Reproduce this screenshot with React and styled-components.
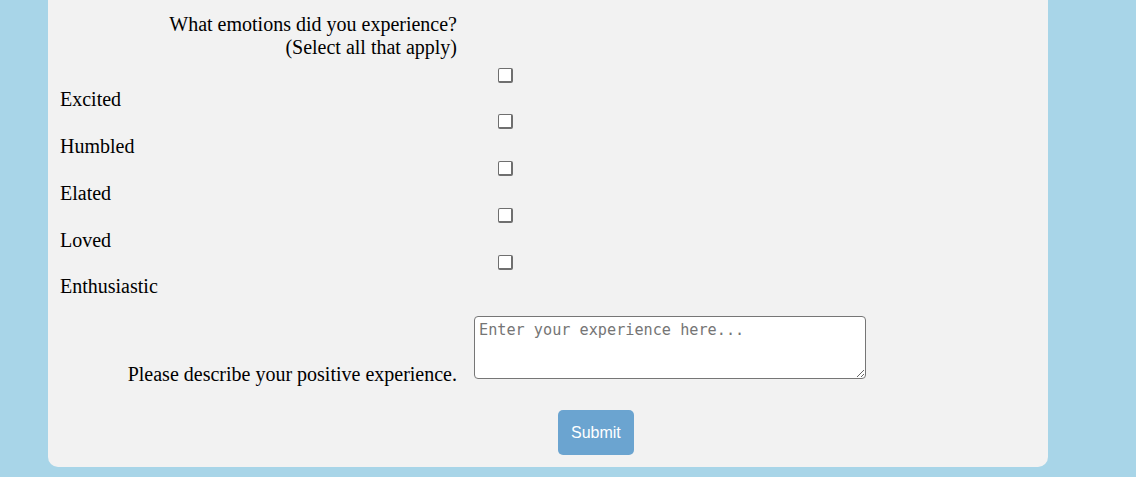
import React from "react";
import styled, { createGlobalStyle } from "styled-components";

const GlobalStyle = createGlobalStyle`
  html, body {
    margin: 0;
    padding: 0;
    background: #a8d5e8;
  }
  body {
    font-family: "Liberation Serif", "Times New Roman", serif;
    color: #000;
  }
`;

const Page = styled.div`
  background: #a8d5e8;
  padding: 0 88px 10px 48px;
`;

const Card = styled.form`
  width: 1000px;
  box-sizing: border-box;
  background: #f2f2f2;
  border-radius: 0 0 10px 10px;
  padding: 12.7px 12px 12px 12px;
  font-size: 20px;
  line-height: 23px;
`;

const FieldRow = styled.div`
  display: grid;
  grid-template-columns: 397px 1fr;
  column-gap: 17px;
  align-items: ${(p) => p.$align || "start"};
  margin-top: ${(p) => p.$top || "0px"};
`;

const RightLabel = styled.label`
  text-align: right;
  display: block;
`;

const EmotionList = styled.div`
  margin-top: 6px;
`;

const CheckRow = styled.div`
  display: grid;
  grid-template-columns: 397px 1fr;
  column-gap: 17px;
  height: 23.75px;
`;

const Check = styled.input.attrs({ type: "checkbox" })`
  appearance: none;
  -webkit-appearance: none;
  grid-column: 2;
  box-sizing: border-box;
  width: 15px;
  height: 15px;
  margin: 3px 0 0 24px;
  background: #fff;
  border-style: solid;
  border-color: #6f6f6f;
  border-width: 1px 2px 2px 1px;
  border-radius: 2px;
`;

const EmotionLabel = styled.label`
  display: block;
  height: 23px;
`;

const TextArea = styled.textarea`
  box-sizing: border-box;
  width: 392px;
  height: 63px;
  margin: 0 0 7px 0;
  padding: 5px 4px 2px 4px;
  border: 1px solid #767676;
  border-radius: 4px;
  background: #fff;
  font-family: "DejaVu Sans Mono", "Liberation Mono", monospace;
  font-size: 15.2px;
  line-height: 17px;
  &::placeholder {
    color: #757575;
  }
`;

const ButtonRow = styled.div`
  display: flex;
  margin-top: 24px;
  padding-left: 498px;
`;

const SubmitButton = styled.button`
  background: #6ba4d0;
  color: #fff;
  border: none;
  border-radius: 5px;
  padding: 13px 13px;
  height: 45px;
  font-family: "Liberation Sans", Arial, sans-serif;
  font-size: 16px;
  line-height: 19px;
  cursor: pointer;
`;

const emotions = ["Excited", "Humbled", "Elated", "Loved", "Enthusiastic"];

export default function App() {
  return (
    <>
      <GlobalStyle />
      <Page>
        <Card onSubmit={(e) => e.preventDefault()}>
          <FieldRow>
            <RightLabel>
              What emotions did you experience?
              <br />
              (Select all that apply)
            </RightLabel>
          </FieldRow>
          <EmotionList>
            {emotions.map((em) => (
              <div key={em}>
                <CheckRow>
                  <Check id={em} name="emotions" value={em} />
                </CheckRow>
                <EmotionLabel htmlFor={em}>{em}</EmotionLabel>
              </div>
            ))}
          </EmotionList>
          <FieldRow $align="end" $top="17.6px">
            <RightLabel htmlFor="experience">
              Please describe your positive experience.
            </RightLabel>
            <TextArea id="experience" placeholder="Enter your experience here..." />
          </FieldRow>
          <ButtonRow>
            <SubmitButton type="submit">Submit</SubmitButton>
          </ButtonRow>
        </Card>
      </Page>
    </>
  );
}
